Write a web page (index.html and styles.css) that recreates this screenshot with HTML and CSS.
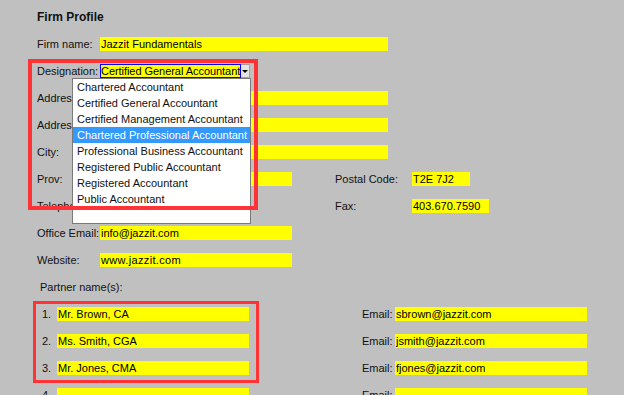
FILE: index.html
```html
<!DOCTYPE html>
<html lang="en">
<head>
    <meta charset="UTF-8">
    <title>Firm Profile</title>
    <link rel="stylesheet" href="styles.css">
</head>
<body>

<div class="page">
    <div class="title">Firm Profile</div>

    <div class="row">
        <span class="lbl">Firm name:</span><span class="field long">Jazzit Fundamentals</span>
    </div>

    <!-- Designation select, opened -->
    <div class="row">
        <span class="lbl">Designation:</span>
        <div class="select">
            <span class="select-val">Certified General Accountant</span>
            <span class="select-btn"><span class="arrow"></span></span>
            <ul class="dropdown">
                <li>Chartered Accountant</li>
                <li>Certified General Accountant</li>
                <li>Certified Management Accountant</li>
                <li class="active">Chartered Professional Accountant</li>
                <li>Professional Business Accountant</li>
                <li>Registered Public Accountant</li>
                <li>Registered Accountant</li>
                <li>Public Accountant</li>
                <li></li>
            </ul>
        </div>
    </div>

    <div class="row">
        <span class="lbl">Address:</span><span class="field long"></span>
    </div>
    <div class="row">
        <span class="lbl">Address:</span><span class="field long"></span>
    </div>
    <div class="row">
        <span class="lbl">City:</span><span class="field long"></span>
    </div>
    <div class="row">
        <div class="left"><span class="lbl">Prov:</span><span class="field"></span></div>
        <span class="lbl2">Postal Code:</span><span class="field postal">T2E 7J2</span>
    </div>
    <div class="row">
        <div class="left"><span class="lbl">Telephone:</span><span class="field tel"></span></div>
        <span class="lbl2">Fax:</span><span class="field fax">403.670.7590</span>
    </div>
    <div class="row">
        <span class="lbl">Office Email:</span><span class="field">info@jazzit.com</span>
    </div>
    <div class="row">
        <span class="lbl">Website:</span><span class="field web">www.jazzit.com</span>
    </div>

    <div class="partners-title">Partner name(s):</div>

    <div class="row prow">
        <div class="pleft"><span class="num">1.</span><span class="field">Mr. Brown, CA</span></div>
        <span class="elbl">Email:</span><span class="field">sbrown@jazzit.com</span>
    </div>
    <div class="row prow">
        <div class="pleft"><span class="num">2.</span><span class="field">Ms. Smith, CGA</span></div>
        <span class="elbl">Email:</span><span class="field">jsmith@jazzit.com</span>
    </div>
    <div class="row prow">
        <div class="pleft"><span class="num">3.</span><span class="field">Mr. Jones, CMA</span></div>
        <span class="elbl">Email:</span><span class="field">fjones@jazzit.com</span>
    </div>
    <div class="row prow">
        <div class="pleft"><span class="num">4.</span><span class="field"></span></div>
        <span class="elbl">Email:</span><span class="field"></span>
    </div>

    <!-- red highlight boxes -->
    <div class="mark mark-designation"></div>
    <div class="mark mark-partners"></div>
</div>

</body>
</html>
```

FILE: styles.css
```css
html, body {
    margin: 0;
    height: 100%;
    overflow: hidden;
}

body {
    background-color: #c0c0c0;
    font-family: "Liberation Sans", Arial, sans-serif;
    font-size: 11px;
    color: #111;
}

.page {
    position: relative;
    padding: 10px 0 0 37px;
    height: 100%;
    box-sizing: border-box;
}

.title {
    font-size: 12px;
    font-weight: bold;
    line-height: 14px;
    margin-bottom: 13px;
}

/* Form rows */
.row {
    display: flex;
    height: 14px;
    line-height: 14px;
    margin-bottom: 13px;
    white-space: nowrap;
}

.lbl {
    width: 63px;
    flex: none;
}

.left {
    display: flex;
    width: 298px;
    flex: none;
}

.lbl2 {
    width: 77px;
    flex: none;
}

.field {
    display: block;
    width: 191px;
    padding-left: 1px;
    height: 14px;
    background-color: #ffff00;
    color: #000;
    flex: none;
}

.field.long { width: 287px; }
.field.postal { width: 57px; }
.field.fax { width: 76px; }
.field.tel { width: 120px; }
.field.web { letter-spacing: 0.35px; }

/* Select with open list */
.select {
    position: relative;
    display: flex;
    width: 151px;
    height: 14px;
    flex: none;
}

.select-val {
    width: 139px;
    height: 12px;
    line-height: 12px;
    border: 1px solid #0000ff;
    background-color: #ffff00;
    color: #000;
    overflow: hidden;
}

.select-val {
    padding-left: 0;
    letter-spacing: -0.05px;
}

.select-btn {
    position: relative;
    width: 8px;
    height: 12px;
    background-color: #e4e4e4;
    border: 1px solid #a0a0a0;
    border-left: none;
}

.arrow {
    position: absolute;
    left: 1px;
    top: 5px;
    width: 0;
    height: 0;
    border-left: 3px solid transparent;
    border-right: 3px solid transparent;
    border-top: 3px solid #000;
}

.dropdown {
    position: absolute;
    left: -28px;
    top: 14px;
    width: 177px;
    margin: 0;
    padding: 0;
    list-style: none;
    background-color: #fff;
    border: 1px solid #7a7a7a;
    z-index: 5;
}

.dropdown li {
    height: 16px;
    line-height: 16px;
    padding-left: 4px;
    color: #111;
}

.dropdown li.active {
    background-color: #3399ff;
    color: #fff;
}

/* Partners */
.partners-title {
    padding-left: 3px;
    line-height: 14px;
    margin-top: 1px;
    margin-bottom: 13px;
}

.pleft {
    display: flex;
    width: 325px;
    padding-left: 5px;
    box-sizing: border-box;
    flex: none;
}

.num {
    width: 15px;
    flex: none;
}

.elbl {
    width: 33px;
    flex: none;
}

/* Red annotation boxes */
.mark {
    position: absolute;
    border-style: solid;
    border-color: #ff3333;
    box-sizing: border-box;
    z-index: 10;
}

.mark-designation {
    left: 28px;
    top: 59px;
    width: 230px;
    height: 151px;
    border-width: 4px;
}

.mark-partners {
    left: 33px;
    top: 301px;
    width: 226px;
    height: 82px;
    border-width: 3px;
}
```
